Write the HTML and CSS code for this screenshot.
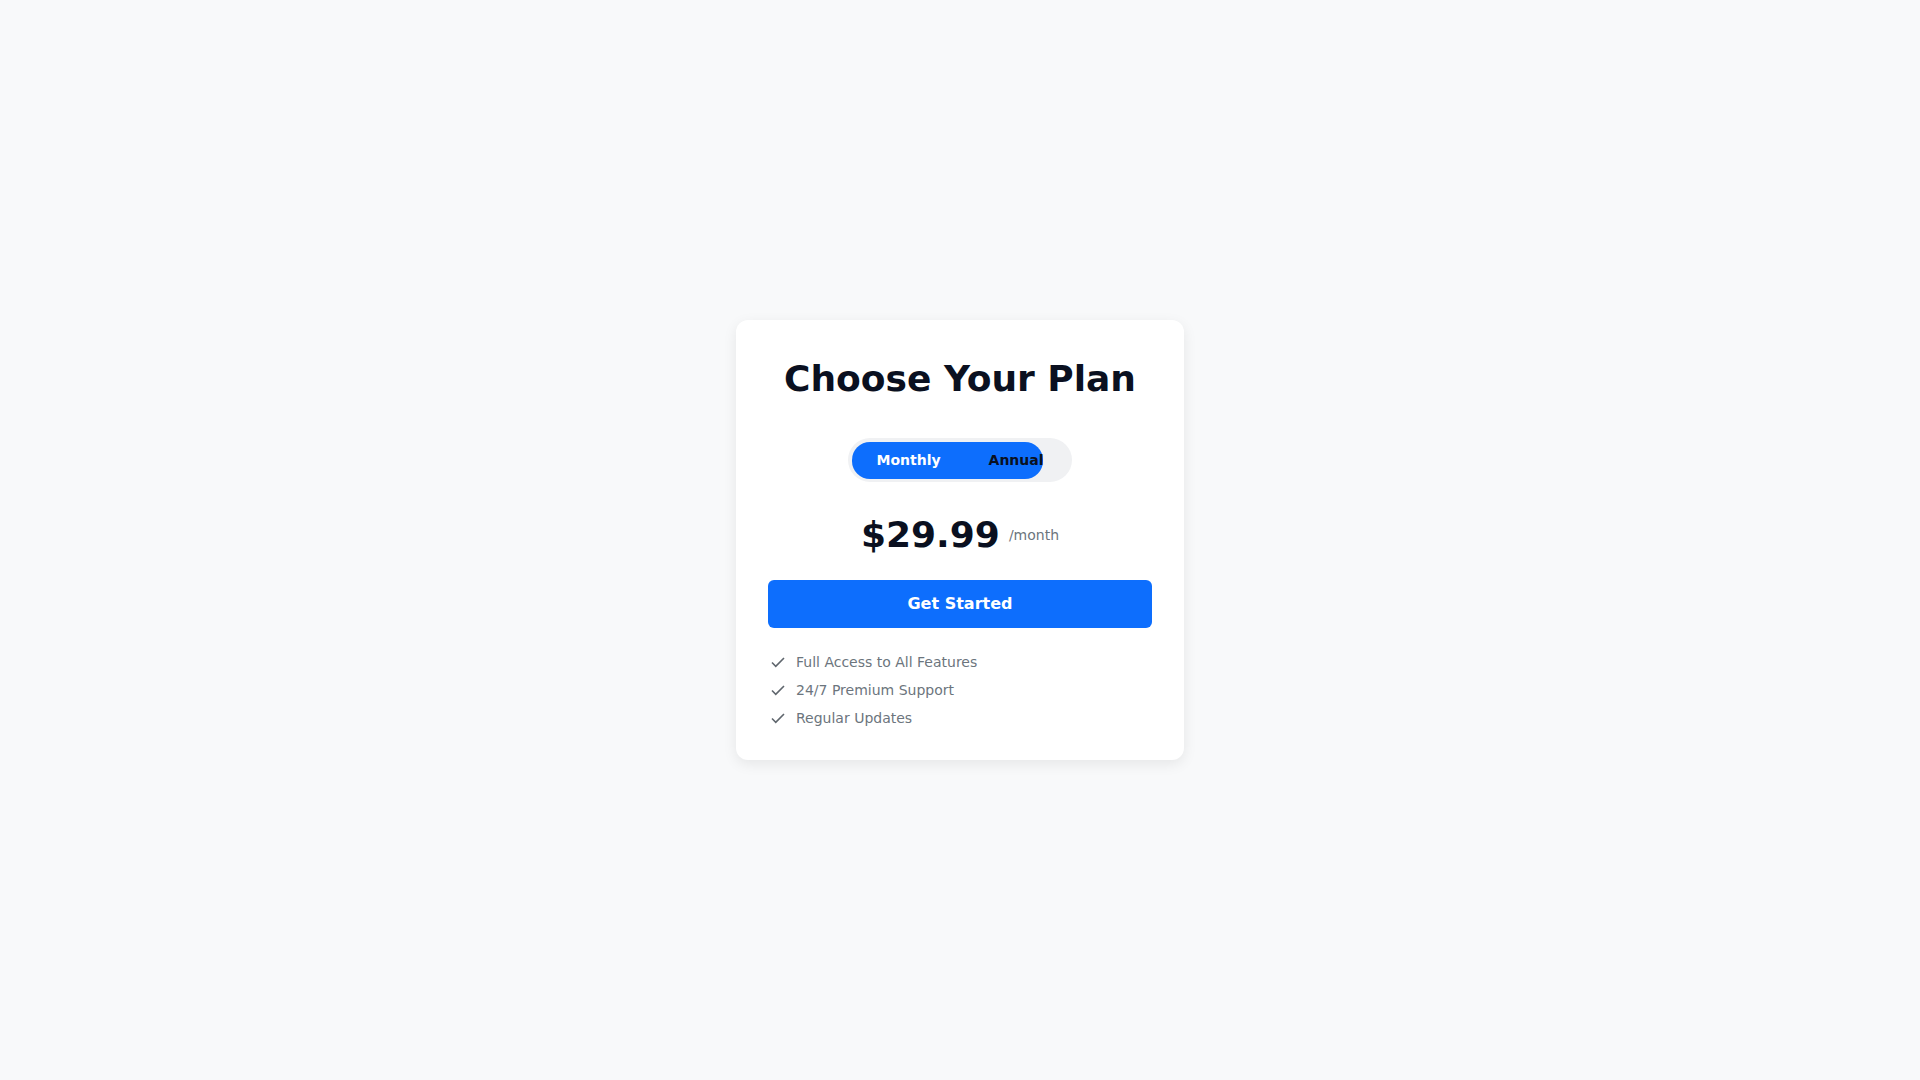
FILE: index.html
```html
<!DOCTYPE html>
<html lang="en">
<head>
    <meta charset="UTF-8">
    <meta name="viewport" content="width=device-width, initial-scale=1.0">
    <title>Choose Your Plan</title>
    <link rel="stylesheet" href="styles.css">
</head>
<body>

    <div class="page">
        <div class="card">

            <h1 class="title">Choose Your Plan</h1>

            <div class="toggle">
                <span class="slider"></span>
                <button class="toggle-btn active">Monthly</button>
                <button class="toggle-btn">Annual</button>
            </div>

            <div class="price">
                <span class="amount">$29.99</span>
                <span class="period">/month</span>
            </div>

            <button class="cta">Get Started</button>

            <ul class="features">
                <li>
                    <svg class="check" viewBox="0 0 16 16" width="16" height="16"><path d="M2 8.5l3.75 3.75L14 4" fill="none" stroke="currentColor" stroke-width="1.6"/></svg>
                    Full Access to All Features
                </li>
                <li>
                    <svg class="check" viewBox="0 0 16 16" width="16" height="16"><path d="M2 8.5l3.75 3.75L14 4" fill="none" stroke="currentColor" stroke-width="1.6"/></svg>
                    24/7 Premium Support
                </li>
                <li>
                    <svg class="check" viewBox="0 0 16 16" width="16" height="16"><path d="M2 8.5l3.75 3.75L14 4" fill="none" stroke="currentColor" stroke-width="1.6"/></svg>
                    Regular Updates
                </li>
            </ul>

        </div>
    </div>

</body>
</html>
```

FILE: styles.css
```css
body {
    margin: 0;
    background-color: #f8f9fa;
    font-family: "DejaVu Sans", sans-serif;
    line-height: 1.5;
    color: #0a1020;
}

.page {
    min-height: 100vh;
    display: flex;
    align-items: center;
    justify-content: center;
}

.card {
    width: 448px;
    box-sizing: border-box;
    padding: 32px;
    background-color: #ffffff;
    border-radius: 12px;
    box-shadow: 0px 4px 14px rgba(0,0,0,.08);
    display: flex;
    flex-direction: column;
    align-items: center;
}

.title {
    margin: 0px;
    font-size: 36px;
    font-weight: bold;
    line-height: 1.5;
    text-align: center;
}

.toggle {
    position: relative;
    display: flex;
    margin-top: 32px;
    padding: 4px;
    background-color: #f0f1f3;
    border-radius: 22px;
}

.slider {
    position: absolute;
    left: 4px;
    top: 4px;
    width: 191px;
    height: 37px;
    background-color: #0d6efd;
    border-radius: 18px;
}

.toggle-btn {
    position: relative;
    border: none;
    background: none;
    padding: 0px 24px;
    height: 36px;
    font-family: inherit;
    font-size: 14px;
    font-weight: bold;
    color: #0a1020;
}

.toggle-btn.active {
    color: #ffffff;
}

.price {
    display: flex;
    align-items: center;
    gap: 9px;
    margin-top: 31px;
}

.amount {
    font-size: 36px;
    font-weight: bold;
    line-height: 1.2;
}

.period {
    font-size: 14px;
    color: #6c757d;
}

.cta {
    width: 100%;
    height: 48px;
    margin-top: 23px;
    border: none;
    border-radius: 6px;
    background-color: #0d6efd;
    color: #ffffff;
    font-family: inherit;
    font-size: 16px;
    font-weight: bold;
}

.features {
    align-self: stretch;
    list-style: none;
    margin: 24px 0px 0px;
    padding: 0px;
}

.features li {
    display: flex;
    align-items: center;
    gap: 10px;
    font-size: 14px;
    line-height: 20px;
    color: #6c757d;
    margin-bottom: 8px;
}

.features li:last-child {
    margin-bottom: 0px;
}

.check {
    flex-shrink: 0;
    margin-left: 2px;
    color: #5f666d;
}
```
